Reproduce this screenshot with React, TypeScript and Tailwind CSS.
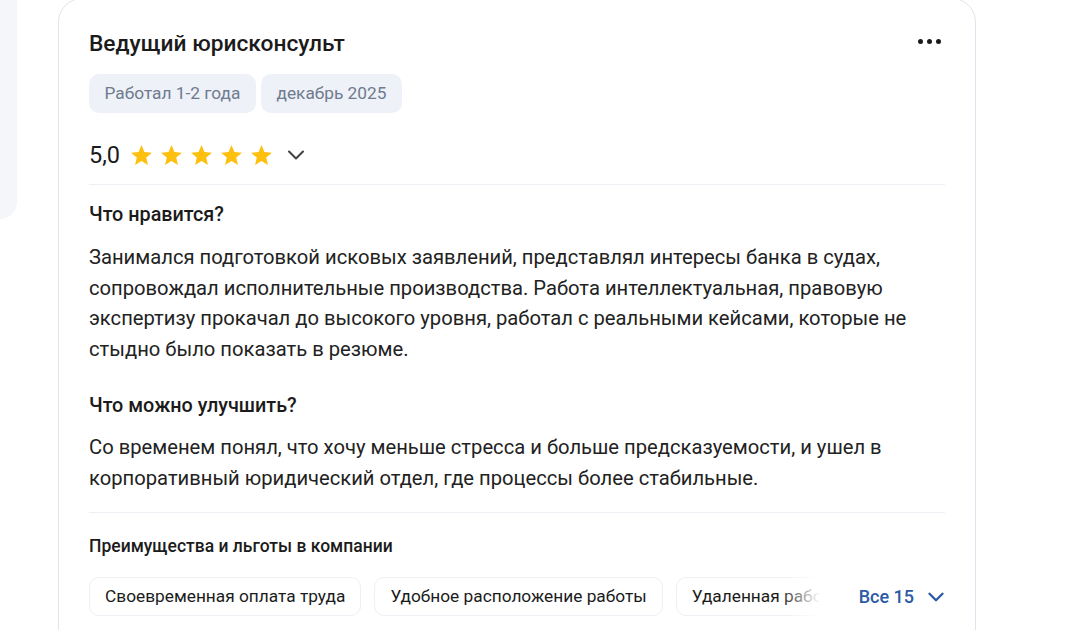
import { ChevronDown } from "lucide-react";

// Отзыв сотрудника: карточка с оценкой, плюсами/минусами и льготами
const TAGS = ["Работал 1-2 года", "декабрь 2025"];

const BENEFITS = [
  "Своевременная оплата труда",
  "Удобное расположение работы",
  "Удаленная работа",
];

const Star = () => (
  <svg width="25" height="25" viewBox="0 0 24 24" className="shrink-0">
    <path
      d="M12 17.27L18.18 21l-1.64-7.03L22 9.24l-7.19-.61L12 2 9.19 8.63 2 9.24l5.46 4.73L5.82 21z"
      fill="#fec00e"
    />
  </svg>
);

export default function App() {
  return (
    <div
      className="flex items-start gap-[41px] bg-white h-[630px] overflow-hidden text-[#1b1b1b]"
      style={{ fontFamily: "Roboto, 'Noto Sans', sans-serif" }}
    >
      {/* фон соседнего блока слева */}
      <div className="w-[17px] h-[219px] shrink-0 bg-[#f4f6fa] rounded-br-[24px]" />

      <div className="-mt-[2px] w-[918px] shrink-0 rounded-[24px] border border-[#e0e4ec] bg-white px-[30px] pt-[30px] pb-[60px]">
        {/* Заголовок */}
        <div className="flex items-start justify-between">
          <h2 className="text-[22.75px] leading-[30px] font-medium">Ведущий юрисконсульт</h2>
          <div className="flex gap-[4px] pt-[10px] pr-[4px]">
            <span className="w-[5px] h-[5px] rounded-full bg-[#1b1b1b]" />
            <span className="w-[5px] h-[5px] rounded-full bg-[#1b1b1b]" />
            <span className="w-[5px] h-[5px] rounded-full bg-[#1b1b1b]" />
          </div>
        </div>

        <div className="mt-[15px] flex gap-[5px]">
          {TAGS.map((t) => (
            <span
              key={t}
              className="rounded-[10px] bg-[#eef1f7] px-[15.5px] py-[8px] text-[17.3px] leading-[23px] text-[#6f7b8e]"
            >
              {t}
            </span>
          ))}
        </div>

        {/* Оценка */}
        <div className="mt-[28px] flex h-[28px] items-center">
          <span className="text-[23.5px] leading-[28px]">5,0</span>
          <div className="ml-[9px] flex gap-[5px]">
            <Star />
            <Star />
            <Star />
            <Star />
            <Star />
          </div>
          <ChevronDown className="ml-[8px] text-[#444]" size={28} strokeWidth={1.8} />
        </div>

        <div className="mt-[15px] h-px bg-[#eef0f5]" />

        <h3 className="mt-[17px] text-[19.8px] leading-[26px] font-medium">Что нравится?</h3>
        <p className="mt-[14px] text-[20.2px] leading-[30.5px] text-[#222]">
          Занимался подготовкой исковых заявлений, представлял интересы банка в судах,
          сопровождал исполнительные производства. Работа интеллектуальная, правовую
          экспертизу прокачал до высокого уровня, работал с реальными кейсами, которые не
          стыдно было показать в резюме.
        </p>

        <h3 className="mt-[29px] text-[19.8px] leading-[26px] font-medium">Что можно улучшить?</h3>
        <p className="mt-[13px] text-[20.2px] leading-[30.5px] text-[#222]">
          Со временем понял, что хочу меньше стресса и больше предсказуемости, и ушел в
          корпоративный юридический отдел, где процессы более стабильные.
        </p>

        <div className="mt-[19px] h-px bg-[#eef0f5]" />

        <h4 className="mt-[21px] text-[17.5px] leading-[24px] font-medium">
          Преимущества и льготы в компании
        </h4>

        {/* Льготы: горизонтальная лента с затуханием справа */}
        <div className="mt-[19px] flex items-center">
          <div className="relative w-[731px] overflow-hidden">
            <div className="flex gap-[13px]">
              {BENEFITS.map((b) => (
                <span
                  key={b}
                  className="shrink-0 rounded-[10px] border border-[#eceff4] px-[15px] py-[7px] text-[17.3px] leading-[23px]"
                >
                  {b}
                </span>
              ))}
            </div>
            <div className="absolute right-0 top-0 h-full w-[40px] bg-gradient-to-r from-transparent to-white" />
          </div>
          <button className="ml-auto flex items-center gap-[9px] text-[18px] font-medium text-[#2c5aa6]">
            Все 15
            <ChevronDown className="-mr-[4px]" size={26} strokeWidth={2.2} />
          </button>
        </div>
      </div>
    </div>
  );
}
